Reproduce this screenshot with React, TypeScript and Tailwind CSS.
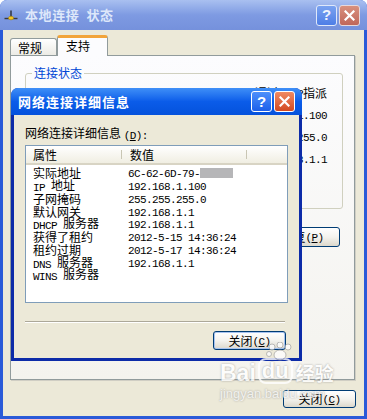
import type { ReactNode } from 'react';

const MONO = "relative top-[1px] font-['Liberation_Mono',monospace] text-[11px] tracking-[-0.6px]";

// ascii runs get the narrow half-width look, the rest stays CJK
function Mix({ s }: { s: string }) {
  const parts = s.split(/([\x20-\x7e]+)/).filter((p) => p !== '');
  return (
    <>
      {parts.map((p, i) =>
        /^[\x20-\x7e]+$/.test(p) ? (
          <span key={i} className={MONO}>
            {p}
          </span>
        ) : (
          <span key={i}>{p}</span>
        )
      )}
    </>
  );
}

const Key = ({ k }: { k: string }) => (
  <span className={MONO}>
    (<u>{k}</u>)
  </span>
);

const HelpBtn = ({ dim }: { dim?: boolean }) => (
  <div
    className={`w-[21px] h-[21px] rounded-[3px] border flex items-center justify-center text-[15px] font-bold font-['Liberation_Sans',sans-serif] ${
      dim
        ? 'border-[#dfe8fa] bg-linear-to-b from-[#7aa2f0] to-[#4e7ee6] text-[#eef3fd]'
        : 'border-white bg-linear-to-b from-[#4d90fb] to-[#1c5fea] text-white'
    }`}
  >
    ?
  </div>
);

const CloseBtn = ({ dim }: { dim?: boolean }) => (
  <div
    className={`w-[21px] h-[21px] rounded-[3px] border flex items-center justify-center ${
      dim
        ? 'border-[#e6d9dc] bg-linear-to-b from-[#d8907e] to-[#c0675a]'
        : 'border-white bg-linear-to-b from-[#f08a62] to-[#d2481f]'
    }`}
  >
    <svg width="11" height="11" viewBox="0 0 11 11">
      <path d="M1.5 1.5 L9.5 9.5 M9.5 1.5 L1.5 9.5" stroke="white" strokeWidth="2.2" strokeLinecap="square" />
    </svg>
  </div>
);

const XpButton = ({ children, className, focus }: { children: ReactNode; className: string; focus?: boolean }) => (
  <div
    className={`flex items-center justify-center rounded-[3px] border border-[#003c74] bg-linear-to-b from-white via-[#f4f3ee] to-[#dcd8cc] ${
      focus ? 'shadow-[inset_0_0_0_1px_#a7c3f0]' : ''
    } ${className}`}
  >
    {children}
  </div>
);

const NetIcon = () => (
  <svg width="14" height="11" viewBox="0 0 14 11">
    <path d="M7 0.5 V8" stroke="#222" strokeWidth="1.3" />
    <path d="M0.5 8.5 H13.5" stroke="#3a3a3a" strokeWidth="1.4" />
    <ellipse cx="7" cy="8" rx="2.6" ry="1.8" fill="#f3c623" stroke="#a88410" strokeWidth="0.6" />
  </svg>
);

const rows: [string, string][] = [
  ['实际地址', '6C-62-6D-79-'],
  ['IP 地址', '192.168.1.100'],
  ['子网掩码', '255.255.255.0'],
  ['默认网关', '192.168.1.1'],
  ['DHCP 服务器', '192.168.1.1'],
  ['获得了租约', '2012-5-15 14:36:24'],
  ['租约过期', '2012-5-17 14:36:24'],
  ['DNS 服务器', '192.168.1.1'],
  ['WINS 服务器', ''],
];

// only the value column of the status group peeks out beside the dialog
const status = ['通过 DHCP 指派', '192.168.1.100', '255.255.255.0', '192.168.1.1'];

export default function App() {
  return (
    <div className="relative w-[367px] h-[419px] overflow-hidden font-['Noto_Sans_CJK_SC',sans-serif] text-[12px] leading-[12px] text-black">
      {/* outer window, inactive */}
      <div className="flex flex-col h-full rounded-t-[7px] bg-[#2a5ad8]">
        <div className="h-[30px] shrink-0 flex items-center pl-[4px] pr-[7px] rounded-t-[7px] bg-linear-to-b from-[#a9c0f0] via-[#7e9ae2] to-[#7591dc]">
          <NetIcon />
          <span className="ml-[7px] text-[13px] font-bold text-[#dde7fa] tracking-[0.6px] whitespace-pre">本地连接  状态</span>
          <div className="ml-auto flex gap-[2px]">
            <HelpBtn dim />
            <CloseBtn dim />
          </div>
        </div>

        <div className="flex-1 mx-[3px] mb-[3px] bg-[#ece9d8] flex flex-col pl-[7px] pr-[9px] pt-[5px]">
          {/* tabs */}
          <div className="h-[20px] flex items-end">
            <div className="h-[17px] w-[47px] pl-[7px] pt-[3px] rounded-t-[3px] border border-b-0 border-[#919b9c] bg-linear-to-b from-white to-[#ecebe5]">
              常规
            </div>
            <div className="relative z-10 -mb-px h-[21px] w-[51px] pl-[8px] pt-[2px] rounded-t-[3px] border-x border-[#919b9c] border-t-[3px] border-t-[#f2a43a] bg-[#fcfcfe]">
              支持
            </div>
          </div>

          {/* tab pane */}
          <div className="h-[325px] border border-[#919b9c] bg-linear-to-b from-[#fcfcfe] to-[#f4f3ee] shadow-[1px_1px_0_#d0cec4] flex flex-col">
            <fieldset className="mt-[10px] ml-[14px] mr-[11px] h-[143px] border border-[#d0d0bf] rounded-[3px] px-[9px]">
              <legend className="ml-[-3px] px-[2px] leading-[14px] text-[#0046d5]">连接状态</legend>
              <div className="pt-[2px] pr-[6px] flex flex-col items-end">
                {status.map((v) => (
                  <div key={v} className="h-[22px] flex items-center">
                    <Mix s={v} />
                  </div>
                ))}
              </div>
            </fieldset>
            <div className="mt-[18px] mr-[14px] flex items-center justify-end">
              <XpButton className="w-[75px] h-[20px]">
                修复<Key k="P" />
              </XpButton>
            </div>
          </div>

          <div className="mt-[10px] -mr-px flex justify-end">
            <XpButton className="w-[73px] h-[18px]">
              关闭<Key k="C" />
            </XpButton>
          </div>
        </div>
      </div>

      {/* details dialog, active, on top */}
      <div className="absolute left-[11px] top-[88px] w-[291px] h-[273px] rounded-t-[7px] bg-[#0c2ba8] flex flex-col">
        <div className="h-[27px] shrink-0 flex items-center pl-[7px] pr-[7px] rounded-t-[7px] bg-linear-to-b from-[#3f8ff7] via-[#0b5ce9] to-[#0552dc]">
          <span className="text-[13px] font-bold text-white tracking-[1px]">网络连接详细信息</span>
          <div className="ml-auto flex gap-[2px]">
            <HelpBtn />
            <CloseBtn />
          </div>
        </div>
        <div className="flex-1 mx-[3px] mb-[3px] bg-[#ece9d8] flex flex-col pl-[11px] pr-[11px] pt-[12px]">
          <div>
            网络连接详细信息 <Key k="D" />
            <span className={MONO}>:</span>
          </div>
          <div className="mt-[4px] h-[158px] border border-[#7f9db9] bg-white flex flex-col">
            <div className="h-[19px] flex border-b-[2px] border-[#d8d4c4] bg-linear-to-b from-white to-[#f0eee2]">
              <div className="w-[95px] pl-[7px] flex items-center">属性</div>
              <div className="w-px my-[4px] bg-[#c9c6b4]" />
              <div className="w-[124px] pl-[8px] flex items-center">数值</div>
              <div className="w-px my-[4px] bg-[#c9c6b4]" />
            </div>
            <div className="pt-[2px] flex flex-col">
              {rows.map(([k, v], i) => (
                <div key={k} className="h-[12.75px] flex items-center">
                  <div className="w-[95px] pl-[7px]">
                    <Mix s={k} />
                  </div>
                  <div className="pl-[7px] flex items-center">
                    <Mix s={v} />
                    {i === 0 && <span className="inline-block w-[33px] h-[10px] bg-[#b6b6b8]" />}
                  </div>
                </div>
              ))}
            </div>
          </div>
          <div className="mt-[18px] mr-[3px] border-t border-[#aca899] border-b border-b-white" />
          <div className="mt-[8px] mr-[2px] flex justify-end">
            <XpButton focus className="w-[73px] h-[19px]">
              关闭<Key k="C" />
            </XpButton>
          </div>
        </div>
      </div>

      {/* watermark */}
      <div className="absolute left-[220px] top-[342px] w-[120px] opacity-80 text-white [text-shadow:0_0_2px_#8a8a8a]">
        <svg className="absolute left-[45px] top-[0px]" width="30" height="20" viewBox="0 0 30 20">
          <g fill="white" stroke="#9a9a9a" strokeWidth="0.8">
            <circle cx="7" cy="5" r="3" />
            <circle cx="15" cy="3" r="3" />
            <circle cx="23" cy="5" r="3" />
            <circle cx="4" cy="12" r="2.5" />
            <ellipse cx="15" cy="13" rx="6" ry="5" />
          </g>
        </svg>
        <div className="mt-[16px] flex items-end font-['Liberation_Sans',sans-serif] font-bold">
          <span className="text-[23px] leading-[22px]">Bai</span>
          <span className="ml-[2px] text-[22px] leading-[22px] px-[2px] rounded-[8px] border-2 border-white">du</span>
          <span className="ml-[3px] text-[19px] leading-[22px] font-['Noto_Sans_CJK_SC',sans-serif]">经验</span>
        </div>
        <div className="mt-[3px] text-[13px] leading-[14px] font-['Liberation_Sans',sans-serif] text-[#f4f4f4]">
          jingyan.baidu.com
        </div>
      </div>
    </div>
  );
}
